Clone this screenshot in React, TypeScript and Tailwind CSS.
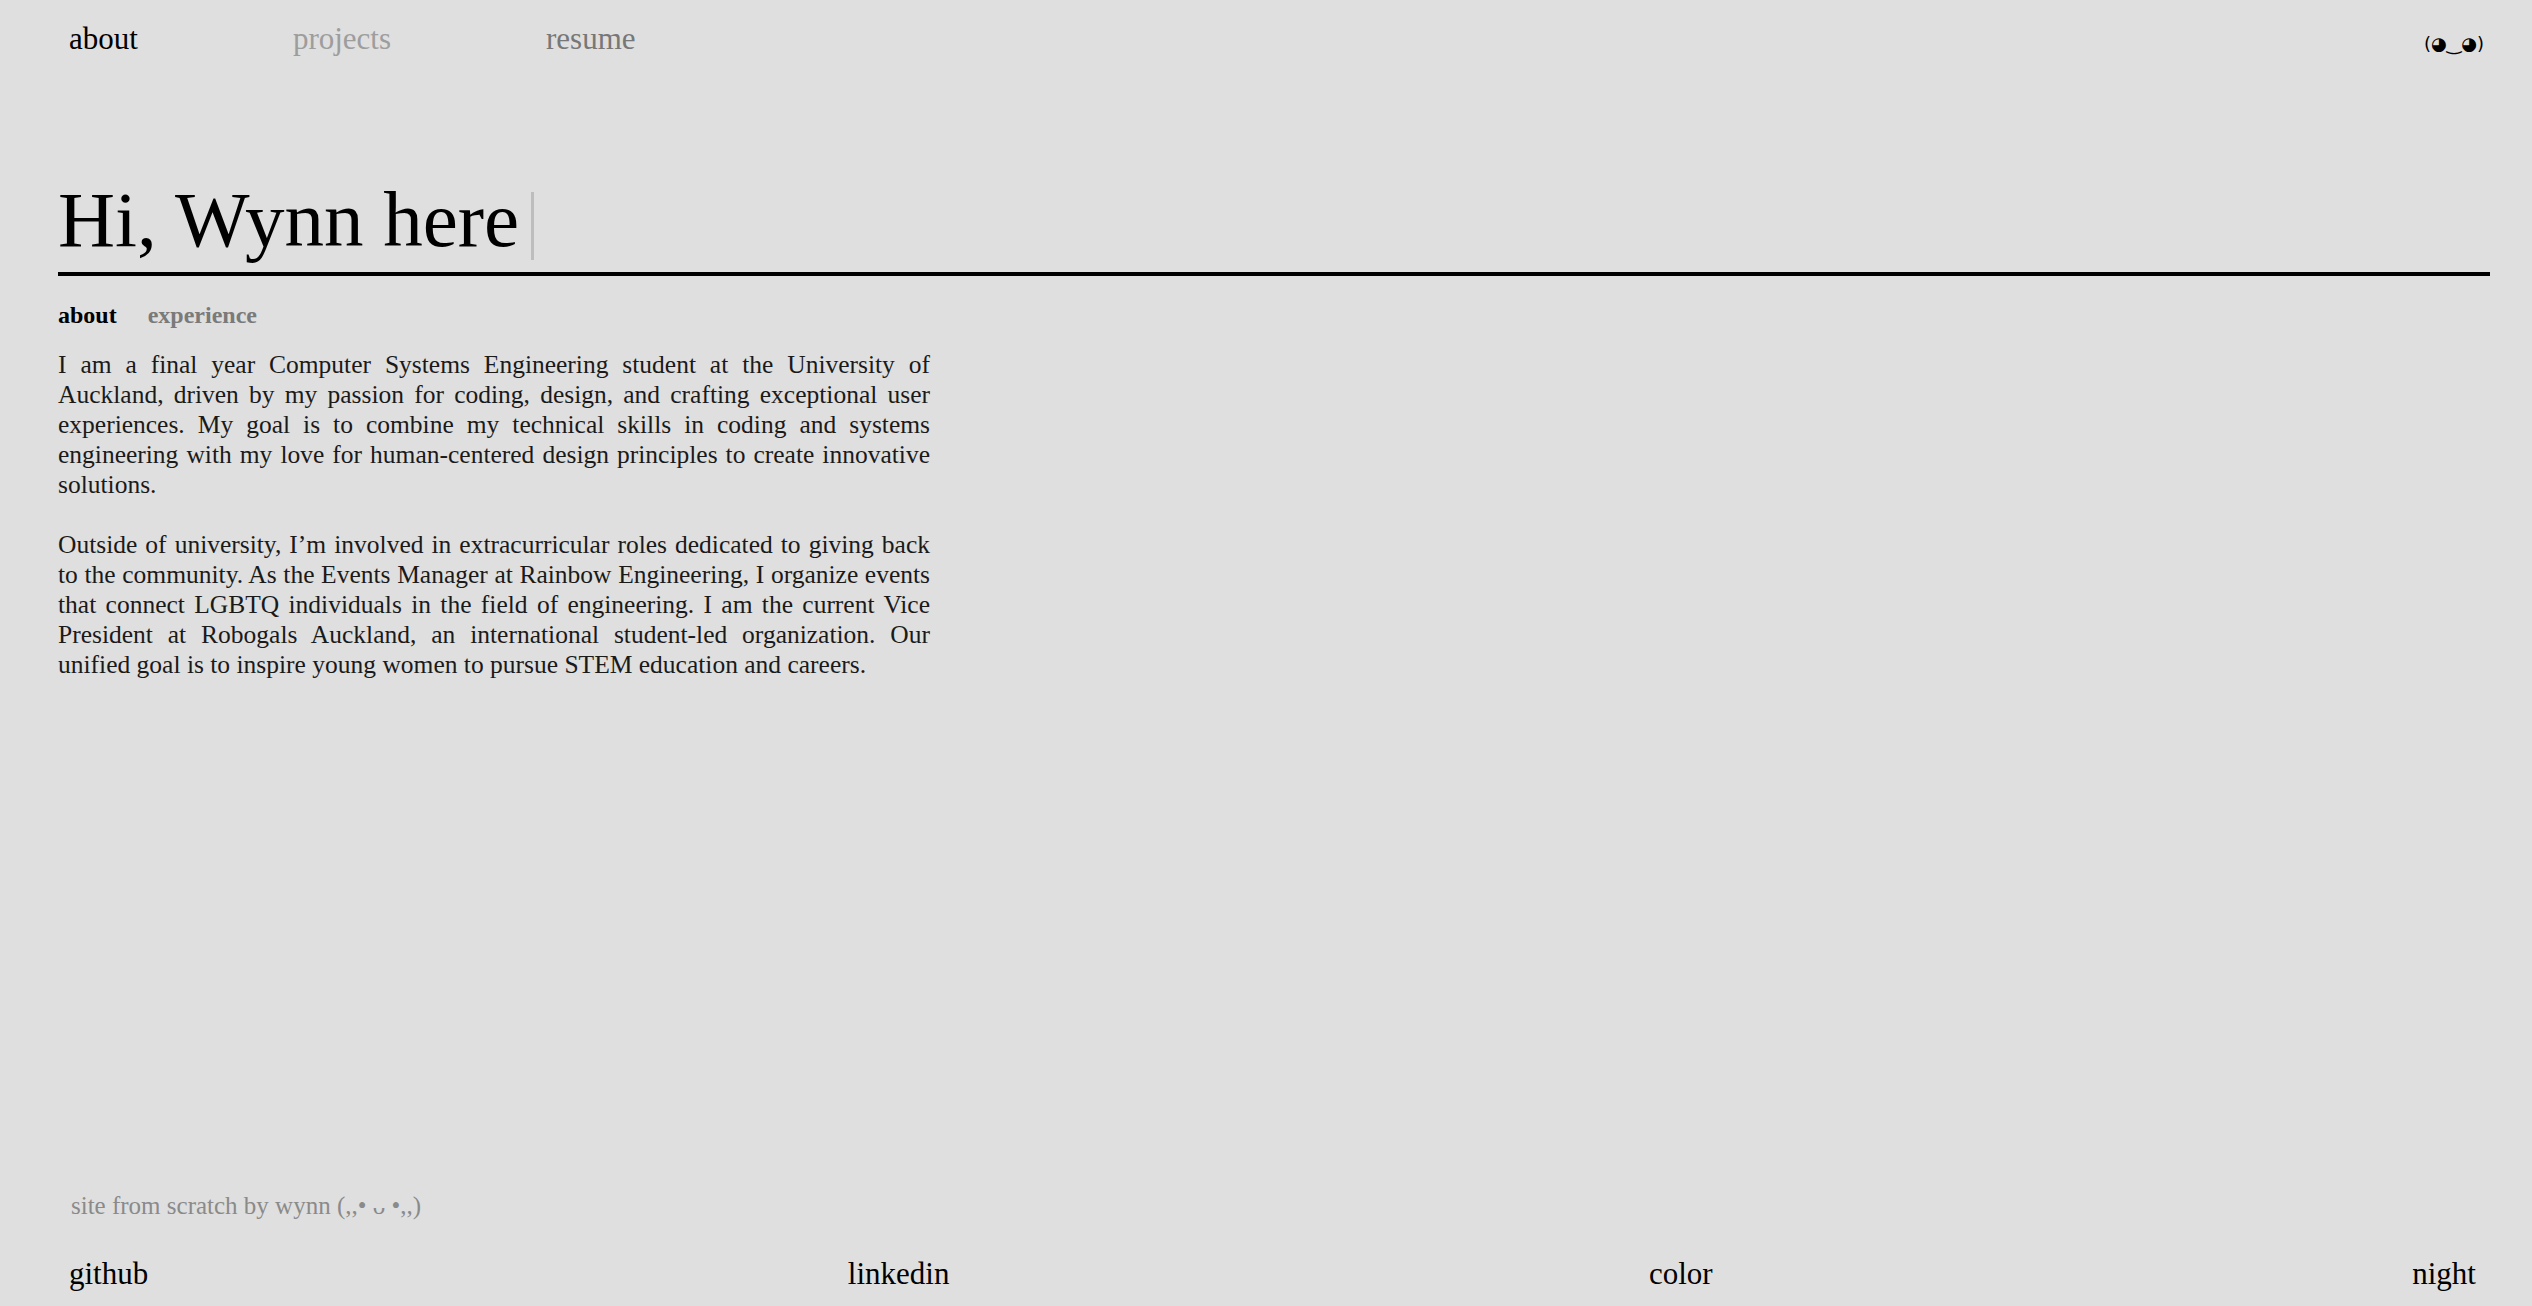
import React from "react";

const navItems = [
  { label: "about", color: "text-black" },
  { label: "projects", color: "text-[#9d9d9d]" },
  { label: "resume", color: "text-[#777777]" },
];

const footerLinks = ["github", "linkedin", "color", "night"];

export default function App() {
  return (
    <div className="min-h-screen flex flex-col bg-[#dfdfdf] text-black font-['Liberation_Serif','Times_New_Roman',serif]">
      {/* Top nav */}
      <header className="flex items-start justify-between h-[58px] pl-[69px] pr-[48px] pt-[21px]">
        <nav className="flex gap-[155px] text-[31px] leading-[36px]">
          {navItems.map((item) => (
            <a key={item.label} className={`${item.color} cursor-pointer`}>
              {item.label}
            </a>
          ))}
        </nav>
        <span className="mt-[10px] text-[18px] leading-[26px] font-['DejaVu_Sans',sans-serif]">
          (◕‿◕)
        </span>
      </header>

      <main className="pl-[58px] pr-[42px]">
        {/* Heading with caret */}
        <div className="flex items-start h-[80px] mt-[122px]">
          <h1 className="text-[79px] leading-[80px]">Hi, Wynn here</h1>
          <span className="ml-[12px] mt-[12px] w-[3px] h-[68px] bg-[#bdbdbd]" />
        </div>
        <div className="mt-[12px] h-[4px] bg-black" />

        {/* Sub tabs */}
        <div className="flex gap-[31px] mt-[24px] text-[24px] leading-[30px] font-bold">
          <span className="text-black">about</span>
          <span className="text-[#7a7a7a]">experience</span>
        </div>

        {/* About text */}
        <div className="w-[872px] mt-[20px] text-[25.5px] leading-[30px] text-justify text-[#1a1a1a]">
          <p className="mb-[30px]">
            I am a final year Computer Systems Engineering student at the
            University of Auckland, driven by my passion for coding, design, and
            crafting exceptional user experiences. My goal is to combine my
            technical skills in coding and systems engineering with my love for
            human-centered design principles to create innovative solutions.
          </p>
          <p>
            Outside of university, I’m involved in extracurricular roles
            dedicated to giving back to the community. As the Events Manager at
            Rainbow Engineering, I organize events that connect LGBTQ
            individuals in the field of engineering. I am the current Vice
            President at Robogals Auckland, an international student-led
            organization. Our unified goal is to inspire young women to pursue
            STEM education and careers.
          </p>
        </div>
      </main>

      {/* Footer */}
      <footer className="mt-auto pb-[14px]">
        <p className="pl-[71px] text-[25px] leading-[30px] text-[#8a8a8a]">
          site from scratch by wynn (,,• ᴗ •,,)
        </p>
        <div className="flex justify-between pl-[69px] pr-[56px] mt-[35px] text-[31px] leading-[36px]">
          {footerLinks.map((l) => (
            <a key={l} className="cursor-pointer">
              {l}
            </a>
          ))}
        </div>
      </footer>
    </div>
  );
}
